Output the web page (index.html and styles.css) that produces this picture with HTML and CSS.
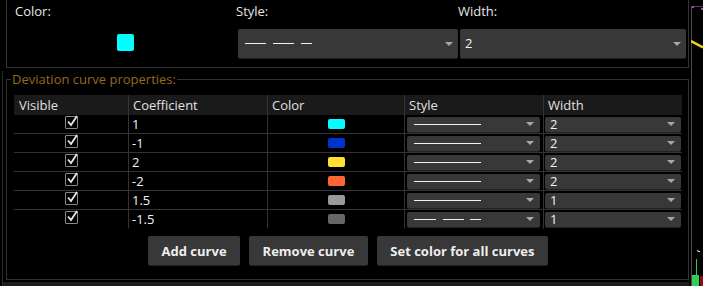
FILE: index.html
```html
<!DOCTYPE html>
<html lang="en">
<head>
  <meta charset="UTF-8">
  <title>Deviation curve properties</title>
  <link rel="stylesheet" href="styles.css">
</head>
<body>
  <div class="screen">
    <div class="dialog">
      <!-- Main line settings -->
      <div class="line-props">
        <div class="field">
          <span class="field-label">Color:</span>
          <div class="field-control field-center"><span class="swatch swatch-big cyan"></span></div>
        </div>
        <div class="field">
          <span class="field-label">Style:</span>
          <div class="field-control">
            <div class="select select-big">
              <svg class="stroke" width="70" height="3"><line x1="0" y1="1.5" x2="21" y2="1.5"/><line x1="28" y1="1.5" x2="49" y2="1.5"/><line x1="56" y1="1.5" x2="67" y2="1.5"/></svg>
              <span class="arrow"></span>
            </div>
          </div>
        </div>
        <div class="field">
          <span class="field-label">Width:</span>
          <div class="field-control">
            <div class="select select-big"><span class="select-value">2</span><span class="arrow"></span></div>
          </div>
        </div>
      </div>

      <!-- Deviation curves -->
      <div class="lower">
        <fieldset class="curves">
          <legend>Deviation curve properties:</legend>
          <div class="curve-table">
            <div class="th">Visible</div>
            <div class="th">Coefficient</div>
            <div class="th">Color</div>
            <div class="th">Style</div>
            <div class="th">Width</div>

            <div class="td td-check"><span class="check"><svg width="14" height="14"><path d="M3 6.5 L6 10 L12 1"/></svg></span></div>
            <div class="td td-text">1</div>
            <div class="td td-center"><span class="swatch cyan"></span></div>
            <div class="td td-select"><div class="select"><span class="stroke-solid"></span><span class="arrow"></span></div></div>
            <div class="td td-select td-width"><div class="select"><span class="select-value">2</span><span class="arrow"></span></div></div>

            <div class="td td-check"><span class="check"><svg width="14" height="14"><path d="M3 6.5 L6 10 L12 1"/></svg></span></div>
            <div class="td td-text">-1</div>
            <div class="td td-center"><span class="swatch blue"></span></div>
            <div class="td td-select"><div class="select"><span class="stroke-solid"></span><span class="arrow"></span></div></div>
            <div class="td td-select td-width"><div class="select"><span class="select-value">2</span><span class="arrow"></span></div></div>

            <div class="td td-check"><span class="check"><svg width="14" height="14"><path d="M3 6.5 L6 10 L12 1"/></svg></span></div>
            <div class="td td-text">2</div>
            <div class="td td-center"><span class="swatch yellow"></span></div>
            <div class="td td-select"><div class="select"><span class="stroke-solid"></span><span class="arrow"></span></div></div>
            <div class="td td-select td-width"><div class="select"><span class="select-value">2</span><span class="arrow"></span></div></div>

            <div class="td td-check"><span class="check"><svg width="14" height="14"><path d="M3 6.5 L6 10 L12 1"/></svg></span></div>
            <div class="td td-text">-2</div>
            <div class="td td-center"><span class="swatch orange"></span></div>
            <div class="td td-select"><div class="select"><span class="stroke-solid"></span><span class="arrow"></span></div></div>
            <div class="td td-select td-width"><div class="select"><span class="select-value">2</span><span class="arrow"></span></div></div>

            <div class="td td-check"><span class="check"><svg width="14" height="14"><path d="M3 6.5 L6 10 L12 1"/></svg></span></div>
            <div class="td td-text">1.5</div>
            <div class="td td-center"><span class="swatch gray"></span></div>
            <div class="td td-select"><div class="select"><span class="stroke-solid"></span><span class="arrow"></span></div></div>
            <div class="td td-select td-width"><div class="select"><span class="select-value">1</span><span class="arrow"></span></div></div>

            <div class="td td-check last"><span class="check"><svg width="14" height="14"><path d="M3 6.5 L6 10 L12 1"/></svg></span></div>
            <div class="td td-text last">-1.5</div>
            <div class="td td-center last"><span class="swatch dark-gray"></span></div>
            <div class="td td-select last"><div class="select">
              <svg class="stroke" width="70" height="3"><line x1="0" y1="1.5" x2="22" y2="1.5"/><line x1="29" y1="1.5" x2="50" y2="1.5"/><line x1="56" y1="1.5" x2="67" y2="1.5"/></svg>
              <span class="arrow"></span></div></div>
            <div class="td td-select td-width last"><div class="select"><span class="select-value">1</span><span class="arrow"></span></div></div>
          </div>
          <div class="actions">
            <button>Add curve</button>
            <button>Remove curve</button>
            <button>Set color for all curves</button>
          </div>
        </fieldset>
        <div class="status-strip"></div>
      </div>
    </div>

    <!-- Chart edge behind the dialog -->
    <div class="chart">
      <svg width="12" height="286">
        <line x1="0.5" y1="6" x2="0.5" y2="286" stroke="#4a4a4a"/>
        <line x1="0" y1="6.5" x2="12" y2="6.5" stroke="#4a4a4a"/>
        <rect x="1" y="6" width="2" height="2" fill="#e020e0"/>
        <rect x="10" y="8" width="2" height="2" fill="#e020e0"/>
        <line x1="0" y1="41" x2="12" y2="47.5" stroke="#f0d020" stroke-width="2.5"/>
        <line x1="6" y1="250.5" x2="9" y2="252" stroke="#ddd" stroke-width="1.2"/>
        <line x1="5.5" y1="259" x2="5.5" y2="275" stroke="#33cc55"/>
        <rect x="1" y="275" width="7" height="11" fill="#33cc55"/>
        <rect x="9" y="276" width="3" height="10" fill="#8a1010"/>
      </svg>
    </div>
  </div>
</body>
</html>
```

FILE: styles.css
```css
/* General */
body {
  margin: 0;
  background: #000;
  color: #e6e6e6;
  font-family: "Open Sans", sans-serif;
  font-size: 13px;
}

.screen {
  display: flex;
  height: 286px;
  overflow: hidden;
}

.dialog {
  width: 689px;
  flex: none;
}

/* Top line settings */
.line-props {
  box-sizing: border-box;
  height: 68px;
  width: 683px;
  margin-left: 6px;
  padding: 2px 0 0 8px;
  border: 1px solid #333;
  border-top: none;
  display: grid;
  grid-template-columns: 221px 222px 1fr;
}

.field {
  display: flex;
  flex-direction: column;
}

.field-label {
  line-height: 18px;
  height: 18px;
}

.field-control {
  margin: 9px 0 0 2px;
  height: 29px;
  display: flex;
  align-items: center;
}

.field-center {
  justify-content: center;
  padding-right: 2px;
}

.field:last-child .field-control {
  margin-right: 2px;
}

/* Dropdowns */
.select {
  position: relative;
  box-sizing: border-box;
  width: 100%;
  height: 15px;
  background: #383838;
  border-radius: 2px;
  box-shadow: 0 1px 0 #222;
  display: flex;
  align-items: center;
  padding-left: 7px;
}

.select-big {
  height: 29px;
  padding-left: 7px;
}

.select-value {
  color: #f2f2f2;
  line-height: 15px;
}

.select-big .select-value {
  margin-left: -2px;
}

.td-width .select {
  padding-left: 5px;
}

.arrow {
  margin-left: auto;
  margin-right: 6px;
  width: 0;
  height: 0;
  border-left: 4px solid transparent;
  border-right: 4px solid transparent;
  border-top: 4px solid #a8a8a8;
}

.select-big .arrow {
  margin-right: 5px;
  border-left-width: 4.5px;
  border-right-width: 4.5px;
}

.stroke line {
  stroke: #f2f2f2;
  stroke-width: 1;
}

.stroke-solid {
  display: block;
  width: 67px;
  height: 1px;
  background: #f2f2f2;
}

/* Swatches */
.swatch {
  display: block;
  width: 17px;
  height: 10px;
  border-radius: 2px;
}

.swatch-big {
  height: 17px;
  margin-top: -2px;
}

.cyan { background: #00ffff; }
.blue { background: #0033cc; }
.yellow { background: #ffe033; }
.orange { background: #ff6633; }
.gray { background: #999; }
.dark-gray { background: #666; }

/* Curves fieldset */
.lower {
  margin: 3px 0 0 2px;
  border-left: 1px solid #2a2a2a;
}

.curves {
  box-sizing: border-box;
  width: 683px;
  margin: 0 0 0 3px;
  padding: 8px 6px 14px 7px;
  border: 1px solid #333;
  min-width: 0;
}

.curves legend {
  color: #94691c;
  line-height: 16px;
  padding: 0 1px;
  margin-left: -3px;
}

.curve-table {
  display: grid;
  grid-template-columns: 114px 139px 137px 139px 1fr;
}

.th {
  background: #1a1a1a;
  height: 20px;
  line-height: 20px;
  padding-left: 4px;
  border-left: 1px solid #333;
  color: #e0e0e0;
}

.th:first-child {
  padding-left: 5px;
  border-left: none;
}

.td {
  height: 18px;
  border-bottom: 1px solid #333;
  border-left: 1px solid #333;
  display: flex;
  align-items: center;
}

.td.last {
  border-bottom-color: transparent;
}

.td-check {
  border-left: none;
  justify-content: center;
  align-items: flex-start;
}

.td-text {
  padding-left: 3px;
  color: #f2f2f2;
}

.td-center {
  justify-content: center;
}

.td-select {
  padding: 0 3px 0 2px;
}

.td-width {
  padding: 0 1px 0 1px;
}

/* Checkbox */
.check {
  position: relative;
  box-sizing: border-box;
  width: 13px;
  height: 13px;
  margin-top: 1px;
  border: 1px solid #888;
  border-radius: 1px;
}

.check svg {
  position: absolute;
  left: -1px;
  top: -2px;
}

.check path {
  fill: none;
  stroke: #e8e8e8;
  stroke-width: 1.8;
}

/* Buttons */
.actions {
  display: flex;
  justify-content: center;
  gap: 9px;
  margin-top: 7px;
}

.actions button {
  height: 29px;
  padding: 0 13.5px;
  background: #383838;
  color: #eee;
  border: none;
  border-radius: 2px;
  box-shadow: 0 1px 0 #222;
  font-family: "Open Sans", sans-serif;
  font-size: 13px;
  font-weight: bold;
}

.status-strip {
  height: 4px;
  margin: 2px 0 0 0;
  background: #1c1c1c;
}

/* Chart edge */
.chart {
  margin-left: 2px;
  flex: 1;
}

.chart svg {
  display: block;
}
```
